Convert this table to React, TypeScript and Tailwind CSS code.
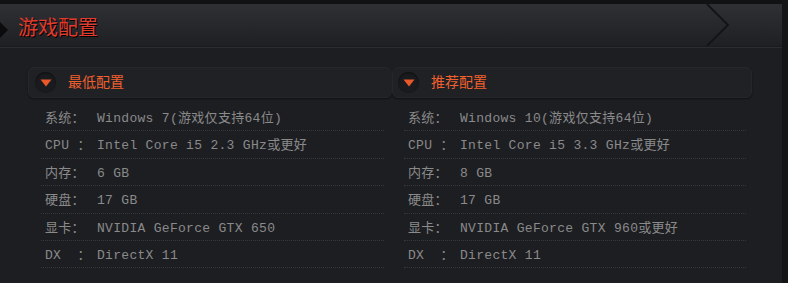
import React from "react";

const rowsMin: [string, string][] = [
  ["系统：", "Windows 7(游戏仅支持64位)"],
  ["CPU ：", "Intel Core i5 2.3 GHz或更好"],
  ["内存：", "6 GB"],
  ["硬盘：", "17 GB"],
  ["显卡：", "NVIDIA GeForce GTX 650"],
  ["DX  ：", "DirectX 11"],
];

const rowsRec: [string, string][] = [
  ["系统：", "Windows 10(游戏仅支持64位)"],
  ["CPU ：", "Intel Core i5 3.3 GHz或更好"],
  ["内存：", "8 GB"],
  ["硬盘：", "17 GB"],
  ["显卡：", "NVIDIA GeForce GTX 960或更好"],
  ["DX  ：", "DirectX 11"],
];

function Arrow() {
  return (
    <div className="w-[21px] h-[21px] rounded-full bg-[#1a1b1e] shadow-[inset_0_1px_2px_rgba(0,0,0,0.5)] flex items-center justify-center">
      <svg width="12" height="8" viewBox="0 0 12 8">
        <polygon points="0.5,0.5 11.5,0.5 6,7.5" fill="#e8582a" />
      </svg>
    </div>
  );
}

function Column({
  title,
  rows,
  boxClass,
  listClass,
}: {
  title: string;
  rows: [string, string][];
  boxClass: string;
  listClass: string;
}) {
  return (
    <div className="flex flex-col">
      <div className={boxClass}>
        <Arrow />
        <span
          className="text-[14px] text-[#f0602e] leading-none -mt-[3px]"
          style={{ fontFamily: '"Noto Sans CJK SC", sans-serif' }}
        >
          {title}
        </span>
      </div>
      <div className={listClass}>
        {rows.map(([k, v], i) => (
          <div
            key={i}
            className="h-[27.4px] flex items-center pt-[3px] border-b border-dotted border-[#36373c] pl-[4px] text-[13px] tracking-[0.3px] text-[#8a8a8a] whitespace-pre"
            style={{ fontFamily: '"Liberation Mono", "Noto Sans CJK SC", monospace' }}
          >
            <span className="w-[52px] shrink-0">{k}</span>
            <span>{v}</span>
          </div>
        ))}
      </div>
    </div>
  );
}

export default function App() {
  return (
    <div className="w-[788px] h-[283px] bg-[#141517] flex overflow-hidden">
      <div className="w-[782px] flex flex-col">
        <div className="h-[4px] bg-[#111214]" />
        <div className="h-[42px] relative flex items-center bg-gradient-to-b from-[#2f3034] to-[#1f2024]">
          <svg className="absolute left-0 top-[18px]" width="9" height="16" viewBox="0 0 9 16">
            <polygon points="0,0 8,8 0,16" fill="#0b0b0d" />
          </svg>
          <span
            className="ml-[18px] mt-[3px] text-[20px] leading-none text-[#e23b2c] [text-shadow:1px_1px_0_#000]"
            style={{ fontFamily: '"Noto Sans CJK SC", sans-serif' }}
          >
            游戏配置
          </span>
          <svg className="absolute left-[705px] top-0" width="26" height="42" viewBox="0 0 26 42">
            <polyline points="2,0 23,21 2,42" fill="none" stroke="#3a3b40" strokeWidth="1" transform="translate(1,0)" />
            <polyline points="2,0 23,21 2,42" fill="none" stroke="#121316" strokeWidth="2" />
          </svg>
        </div>
        <div className="h-[1px] bg-[#1a1b1e]" />
        <div className="h-[1px] bg-[#2c2d31]" />
        <div className="flex-1 bg-[#1d1e22] pt-[19px] pl-[28px] flex">
          <Column
            title="最低配置"
            rows={rowsMin}
            boxClass="w-[364px] h-[31px] flex items-center gap-[12px] pl-[6px] rounded-[6px] border border-[#26272b] bg-[#202125] shadow-[0_1px_2px_rgba(0,0,0,0.4)]"
            listClass="mt-[6px] ml-[13px] mr-[8px]"
          />
          <Column
            title="推荐配置"
            rows={rowsRec}
            boxClass="w-[360px] h-[31px] flex items-center gap-[12px] pl-[5px] rounded-[6px] border border-[#26272b] bg-[#202125] shadow-[0_1px_2px_rgba(0,0,0,0.4)]"
            listClass="mt-[6px] ml-[12px] mr-[6px]"
          />
        </div>
      </div>
    </div>
  );
}
